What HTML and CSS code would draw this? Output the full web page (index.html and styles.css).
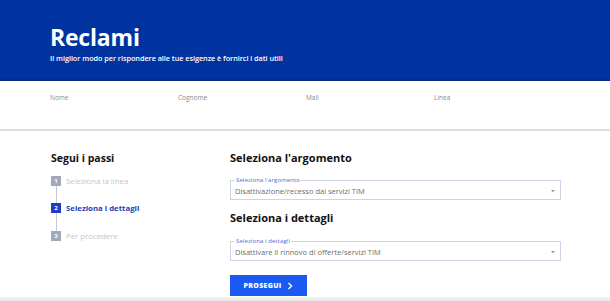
FILE: index.html
```html
<!DOCTYPE html>
<html lang="it">
<head>
<meta charset="utf-8">
<title>Reclami</title>
<link rel="stylesheet" href="styles.css">
</head>
<body>
<header class="hero">
  <h1 class="hero-title">Reclami</h1>
  <p class="hero-sub">Il miglior modo per rispondere alle tue esigenze è fornirci i dati utili</p>
</header>
<div class="fields">
  <span class="field">Nome</span>
  <span class="field">Cognome</span>
  <span class="field">Mail</span>
  <span class="field">Linea</span>
</div>
<main class="main">
  <aside class="steps">
    <h2 class="steps-title">Segui i passi</h2>
    <ol class="step-list">
      <li class="step"><span class="num">1</span><span class="label">Seleziona la linea</span></li>
      <li class="step active"><span class="num">2</span><span class="label">Seleziona i dettagli</span></li>
      <li class="step"><span class="num">3</span><span class="label">Per procedere</span></li>
    </ol>
  </aside>
  <section class="content">
    <h2 class="sec-title">Seleziona l'argomento</h2>
    <div class="select">
      <span class="legend">Seleziona l'argomento</span>
      <span class="value">Disattivazione/recesso dai servizi TIM</span>
      <span class="caret"></span>
    </div>
    <h2 class="sec-title second">Seleziona i dettagli</h2>
    <div class="select">
      <span class="legend">Seleziona i dettagli</span>
      <span class="value">Disattivare il rinnovo di offerte/servizi TIM</span>
      <span class="caret"></span>
    </div>
    <button class="btn">PROSEGUI <svg class="chev" width="6" height="8" viewBox="0 0 6 8"><path d="M1.5 1 L4.5 4 L1.5 7" fill="none" stroke="#fff" stroke-width="1.4"/></svg></button>
  </section>
</main>
<div class="bottom"></div>
</body>
</html>
```
FILE: styles.css
```css
* { box-sizing: border-box; }
html, body { margin: 0; padding: 0; }
body {
  width: 610px;
  height: 301px;
  overflow: hidden;
  background: #fff;
  font-family: "Open Sans", "Noto Sans", sans-serif;
  color: #1c1c1c;
}
.hero {
  height: 81px;
  background: #0033a0;
  border-bottom: 2px solid #0b2a86;
  padding: 23px 0 0 50px;
  color: #fff;
}
.hero-title {
  margin: 0;
  font-size: 23px;
  line-height: 28px;
  font-weight: 700;
  letter-spacing: -0.2px;
}
.hero-sub {
  margin: 1px 0 0;
  font-size: 7.3px;
  line-height: 12px;
  font-weight: 600;
  letter-spacing: -0.05px;
}
.fields {
  display: flex;
  height: 50px;
  padding: 12px 0 0 50px;
  border-bottom: 2px solid #dcdcdc;
}
.field {
  width: 128px;
  font-size: 6.5px;
  color: #8a8a8a;
}
.main {
  display: flex;
  padding: 20px 0 0 51px;
  height: 166px;
}
.steps { width: 179px; }
.steps-title {
  margin: 0 0 10px;
  font-size: 10.5px;
  line-height: 14px;
  font-weight: 700;
  color: #111;
}
.step-list {
  list-style: none;
  margin: 0;
  padding: 0;
  position: relative;
}
.step-list::before {
  content: "";
  position: absolute;
  left: 5px;
  top: 6px;
  bottom: 6px;
  width: 1px;
  background: #c6cad2;
}
.step {
  position: relative;
  display: flex;
  align-items: center;
  height: 11px;
  margin-bottom: 16.5px;
}
.num {
  width: 10px;
  height: 10px;
  background: #a3a9b6;
  color: #fff;
  font-size: 6px;
  font-weight: 700;
  display: flex;
  align-items: center;
  justify-content: center;
  margin-right: 5px;
}
.label {
  font-size: 7.8px;
  color: #c4c6cc;
}
.step.active .num { background: #1f3fc8; }
.step.active .label { color: #1f3fb0; font-weight: 700; }
.content { width: 331px; }
.sec-title {
  margin: 0 0 15px;
  font-size: 11px;
  line-height: 14px;
  font-weight: 700;
  color: #111;
}
.sec-title.second { margin: 11px 0 16px; }
.select {
  position: relative;
  height: 20px;
  border: 1px solid #cfd3e8;
  display: flex;
  align-items: center;
  padding: 2px 0 0 4px;
}
.legend {
  position: absolute;
  top: -4px;
  left: 4px;
  padding: 0 1px;
  background: #fff;
  font-size: 6px;
  line-height: 6px;
  letter-spacing: 0.1px;
  color: #4c6bd6;
}
.value {
  font-size: 7.5px;
  color: #6d6d6d;
}
.caret {
  position: absolute;
  right: 5px;
  top: 9px;
  width: 0;
  height: 0;
  border-left: 2px solid transparent;
  border-right: 2px solid transparent;
  border-top: 2px solid #888;
}
.btn {
  margin-top: 14px;
  width: 77px;
  height: 21px;
  border: 0;
  background: #1a5af0;
  color: #fff;
  font-family: inherit;
  font-size: 7px;
  font-weight: 800;
  letter-spacing: 0.3px;
  display: flex;
  align-items: center;
  justify-content: center;
  gap: 6px;
  padding: 0;
}
.chev { display: block; }
.bottom {
  height: 4px;
  background: linear-gradient(#f3f3f3, #e6e6e6);
}
```
